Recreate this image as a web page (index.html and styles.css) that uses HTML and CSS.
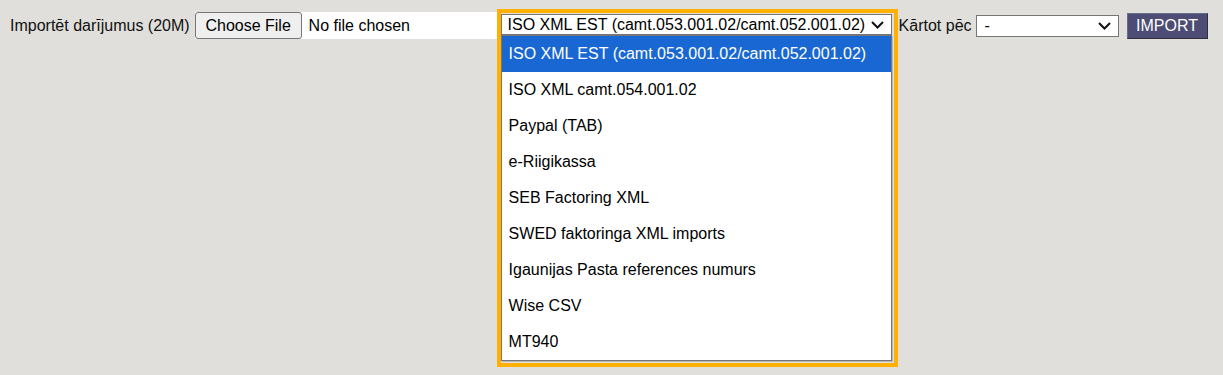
FILE: index.html
```html
<!DOCTYPE html>
<html lang="lv">
<head>
  <meta charset="UTF-8">
  <meta name="viewport" content="width=device-width, initial-scale=1.0">
  <title>Importēt darījumus</title>
  <link rel="stylesheet" href="styles.css">
</head>
<body>
  <div class="bar">
    <span class="lbl">Importēt darījumus (20M)</span>

    <div class="file">
      <span class="file-btn">Choose File</span>
      <span class="file-name">No file chosen</span>
    </div>

    <div class="pick">
      <div class="sel sel-wide">
        <span>ISO XML EST (camt.053.001.02/camt.052.001.02)</span>
        <svg class="chev" width="13" height="8" viewBox="0 0 13 8"><path d="M1 1l5.5 5.5L12 1" fill="none" stroke="#111" stroke-width="2"/></svg>
      </div>
      <ul class="list">
        <li class="active">ISO XML EST (camt.053.001.02/camt.052.001.02)</li>
        <li>ISO XML camt.054.001.02</li>
        <li>Paypal (TAB)</li>
        <li>e-Riigikassa</li>
        <li>SEB Factoring XML</li>
        <li>SWED faktoringa XML imports</li>
        <li>Igaunijas Pasta references numurs</li>
        <li>Wise CSV</li>
        <li>MT940</li>
      </ul>
      <div class="halo"></div>
    </div>

    <span class="lbl lbl-sort">Kārtot pēc</span>
    <div class="sel sel-sort">
      <span>-</span>
      <svg class="chev" width="13" height="8" viewBox="0 0 13 8"><path d="M1 1l5.5 5.5L12 1" fill="none" stroke="#111" stroke-width="2"/></svg>
    </div>

    <button class="import">IMPORT</button>
  </div>
</body>
</html>
```

FILE: styles.css
```css
/* page */
html {
  height: 100%;
}
body {
  margin: 0;
  min-height: 100%;
  box-sizing: border-box;
  padding: 12px 10px 0;
  background-color: #e0dfdb;
  font-family: "Liberation Sans", Arial, sans-serif;
  font-size: 16px;
  color: #111;
}
.bar {
  display: flex;
  align-items: center;
  height: 27px;
}
.lbl {
  white-space: nowrap;
}

/* file input */
.file {
  display: flex;
  margin-left: 5px;
  height: 27px;
  background-color: #fff;
}
.file-btn {
  display: flex;
  align-items: center;
  justify-content: center;
  box-sizing: border-box;
  width: 107px;
  height: 27px;
  background-color: #efefef;
  border: 1px solid #767676;
  border-radius: 3px;
  color: #000;
  white-space: nowrap;
}
.file-name {
  display: flex;
  align-items: center;
  width: 195px;
  padding-left: 7px;
  box-sizing: border-box;
  color: #000;
  white-space: nowrap;
}

/* selects */
.sel {
  display: flex;
  align-items: center;
  justify-content: space-between;
  box-sizing: border-box;
  background-color: #fff;
  border: 1px solid #767676;
  color: #000;
  white-space: nowrap;
}
.sel-wide {
  width: 391px;
  height: 21px;
  padding: 0 7px 0 6px;
}
.sel-sort {
  width: 143px;
  height: 22px;
  padding: 0 7px 0 8px;
  margin-left: 4px;
}
.chev {
  flex: none;
}

/* open dropdown */
.pick {
  position: relative;
  margin-left: 4px;
  margin-bottom: 2px;
}
.list {
  position: absolute;
  left: 0;
  top: 21px;
  width: 391px;
  box-sizing: border-box;
  margin: 0;
  padding: 0;
  list-style: none;
  background-color: #fff;
  border: 1px solid #767676;
  box-shadow: 1px 1px 0 #b9b9b9;
  z-index: 2;
}
.list li {
  height: 36px;
  line-height: 36px;
  padding-left: 7px;
  color: #000;
  white-space: nowrap;
}
.list li.active {
  background-color: #1967d2;
  color: #fff;
}
.halo {
  position: absolute;
  left: -4px;
  top: -5px;
  width: 401px;
  height: 358px;
  box-sizing: border-box;
  border: 4px solid #ffb000;
  z-index: 3;
  pointer-events: none;
}

.lbl-sort {
  margin-left: 7px;
}

/* import button */
.import {
  margin-left: 8px;
  width: 81px;
  height: 26px;
  padding: 0;
  background-color: #4c4c74;
  color: #fff;
  border: 1px solid #2e2e3c;
  border-top-color: #6a6a8a;
  border-left-color: #6a6a8a;
  font-family: "Liberation Sans", Arial, sans-serif;
  font-size: 16px;
  cursor: pointer;
}
.import:hover {
  background-color: #3e3e62;
}
```
